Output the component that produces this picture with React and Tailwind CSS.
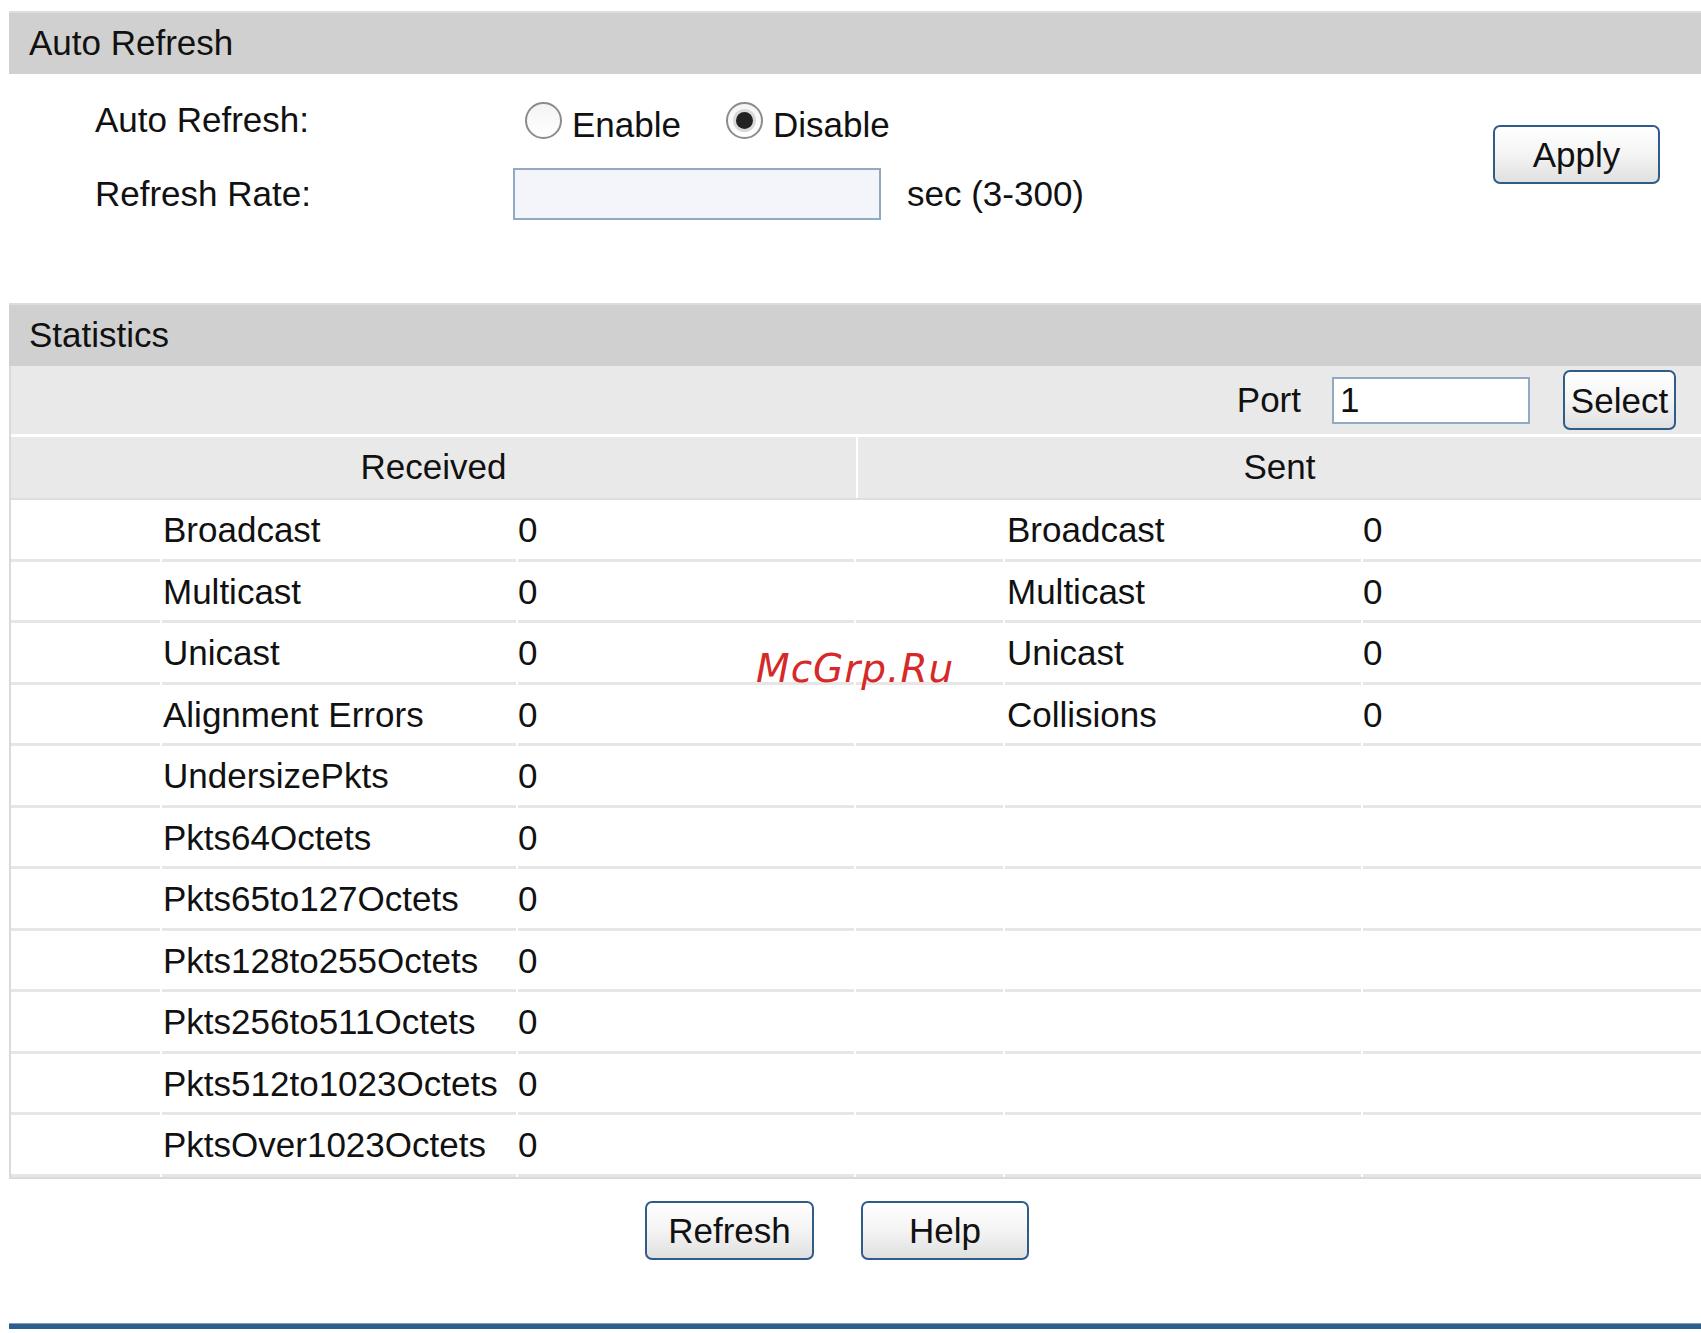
const rows = [
    ['Broadcast', '0', 'Broadcast', '0'],
    ['Multicast', '0', 'Multicast', '0'],
    ['Unicast', '0', 'Unicast', '0'],
    ['Alignment Errors', '0', 'Collisions', '0'],
    ['UndersizePkts', '0', '', ''],
    ['Pkts64Octets', '0', '', ''],
    ['Pkts65to127Octets', '0', '', ''],
    ['Pkts128to255Octets', '0', '', ''],
    ['Pkts256to511Octets', '0', '', ''],
    ['Pkts512to1023Octets', '0', '', ''],
    ['PktsOver1023Octets', '0', '', ''],
];

const SectionTitle = ({ children }) => (
    <div className="ml-[9px] h-[63px] bg-[#d0d0d0] border-t-2 border-[#dddddd] pl-[20px] flex items-center">
        {children}
    </div>
);

const Button = ({ children, className = '' }) => (
    <button
        type="button"
        className={`h-[59px] rounded-[7px] border-2 border-[#2f5c8a] bg-gradient-to-b from-[#ffffff] via-[#f4f4f4] to-[#e0e0e0] text-[35px] leading-none text-[#111] ${className}`}
    >
        {children}
    </button>
);

const Radio = ({ checked }) => (
    <span className="w-[37px] h-[37px] rounded-full border-2 border-[#8c8c8c] bg-gradient-to-b from-[#f4f4f4] to-white flex items-center justify-center shrink-0">
        {checked && <span className="w-[17px] h-[17px] rounded-full bg-[#222] shadow-[0_0_0_3px_#d8d8d8]" />}
    </span>
);

const Cell = ({ className = '', children }) => (
    <div className={`h-full border-b-[3px] border-[#e6e6e6] flex items-center ${className}`}>{children}</div>
);

export default function App() {
    return (
        <div className="w-[1701px] h-[1333px] bg-white relative overflow-hidden text-[35px] text-[#111] font-['Liberation_Sans',Arial,sans-serif] pt-[11px]">
            <SectionTitle>Auto Refresh</SectionTitle>

            <div className="h-[229px] flex items-start">
                <div className="pl-[95px] pt-[22px] flex flex-col gap-[24px]">
                    <div className="h-[48px] flex items-center">
                        <span className="w-[418px]">Auto Refresh:</span>
                        <span className="ml-[12px]"><Radio /></span>
                        <span className="ml-[10px] mt-[10px]">Enable</span>
                        <span className="ml-[45px]"><Radio checked /></span>
                        <span className="ml-[10px] mt-[10px]">Disable</span>
                    </div>
                    <div className="h-[52px] flex items-center">
                        <span className="w-[418px]">Refresh Rate:</span>
                        <input className="w-[368px] h-[52px] bg-[#f3f5fa] border-2 border-[#92a9c4] outline-none" />
                        <span className="ml-[26px]">sec (3-300)</span>
                    </div>
                </div>
                <Button className="ml-auto mr-[41px] mt-[51px] w-[167px]">Apply</Button>
            </div>

            <SectionTitle>Statistics</SectionTitle>

            <div className="ml-[9px] border-l-2 border-b-2 border-[#dadada]">
                <div className="h-[68px] bg-[#e9e9e9] flex items-center justify-end pr-[25px]">
                    <span>Port</span>
                    <input
                        defaultValue="1"
                        className="ml-[31px] w-[198px] h-[47px] bg-white border-2 border-[#92a9c4] pl-[6px] text-[35px] outline-none"
                    />
                    <Button className="ml-[33px] w-[113px] h-[60px]">Select</Button>
                </div>
                <div className="h-[3px] bg-white" />
                <div className="h-[63px] flex border-b-2 border-[#dedede]">
                    <div className="w-[845px] bg-[#e9e9e9] flex items-center justify-center">Received</div>
                    <div className="w-[2px] bg-white" />
                    <div className="flex-1 bg-[#e9e9e9] flex items-center justify-center">Sent</div>
                </div>

                {rows.map((r, i) => (
                    <div key={i} className="h-[61.5px] flex gap-[2px]">
                        <Cell className="w-[149px]" />
                        <Cell className="w-[354px] pl-[1px] pt-[2px] whitespace-nowrap">{r[0]}</Cell>
                        <Cell className="w-[336px] pt-[2px]">{r[1]}</Cell>
                        <Cell className="w-[147px]" />
                        <Cell className="w-[356px] pl-[2px] pt-[2px] whitespace-nowrap">{r[2]}</Cell>
                        <Cell className="flex-1 pt-[2px]">{r[3]}</Cell>
                    </div>
                ))}
            </div>

            <div className="flex pl-[645px] gap-[47px] mt-[22px]">
                <Button className="w-[169px]">Refresh</Button>
                <Button className="w-[168px]">Help</Button>
            </div>

            <div className="ml-[9px] mt-[63px] h-[6px] bg-[#2d5f8e] border-t border-[#7e9fc0]" />

            <div className="absolute left-[756px] top-[640px] text-[39px] italic tracking-[1px] text-[#d62a2a] font-['DejaVu_Sans',sans-serif]">
                McGrp.Ru
            </div>
        </div>
    );
}
